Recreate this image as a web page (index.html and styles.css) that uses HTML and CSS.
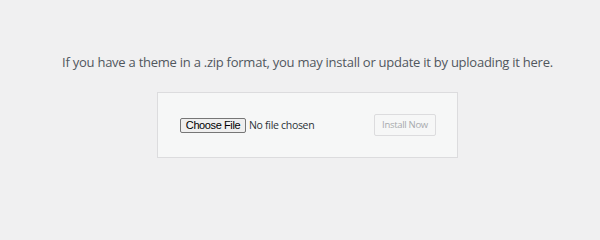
FILE: index.html
```html
<!DOCTYPE html>
<html>
<head>
<meta charset="utf-8">
<link rel="stylesheet" href="styles.css">
</head>
<body>
<div class="wrap">
  <p class="help">If you have a theme in a .zip format, you may install or update it by uploading it here.</p>
  <form class="upload-form">
    <div class="file-field">
      <span class="choose-btn">Choose File</span>
      <span class="file-status">No file chosen</span>
    </div>
    <span class="install-btn">Install Now</span>
  </form>
</div>
</body>
</html>
```

FILE: styles.css
```css
html, body {
  margin: 0;
  padding: 0;
  background: #f0f0f1;
  overflow: hidden;
}
.wrap {
  width: 600px;
  height: 214px;
  box-sizing: border-box;
  padding-left: 15px;
  display: flex;
  flex-direction: column;
  align-items: center;
  font-family: "Open Sans", "Noto Sans", sans-serif;
}
.help {
  margin: 0;
  padding-top: 53px;
  font-size: 13px;
  letter-spacing: -0.25px;
  line-height: 18px;
  color: #50575e;
  text-align: center;
}
.upload-form {
  margin-top: 21px;
  width: 301px;
  height: 66px;
  box-sizing: border-box;
  background: #f6f7f7;
  border: 1px solid #dcdcde;
  padding: 0 21px 0 22px;
  display: flex;
  align-items: center;
  justify-content: space-between;
}
.file-field {
  display: flex;
  align-items: center;
  gap: 3px;
}
.choose-btn {
  display: inline-block;
  box-sizing: border-box;
  width: 66px;
  height: 15px;
  background: #efefef;
  border: 1px solid #767676;
  border-radius: 2px;
  font-family: "Liberation Sans", Arial, sans-serif;
  font-size: 11px;
  letter-spacing: -0.4px;
  line-height: 13px;
  text-align: center;
  color: #000;
}
.file-status {
  font-size: 10.5px;
  letter-spacing: -0.3px;
  color: #2c3338;
}
.install-btn {
  display: inline-block;
  box-sizing: border-box;
  width: 62px;
  height: 22px;
  border: 1px solid #dcdcde;
  border-radius: 2px;
  background: #f6f7f7;
  color: #a7aaad;
  font-size: 9.5px;
  letter-spacing: -0.3px;
  line-height: 20px;
  text-align: center;
}
```
